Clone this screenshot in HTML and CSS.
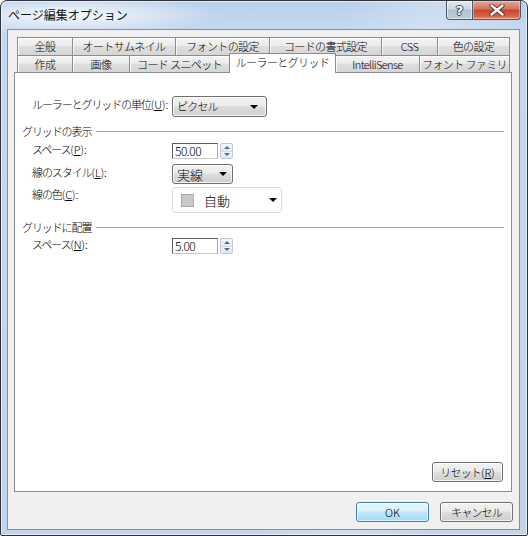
FILE: index.html
```html
<!DOCTYPE html>
<html lang="ja">
<head>
<meta charset="utf-8">
<title>ページ編集オプション</title>
<link rel="stylesheet" href="styles.css">
</head>
<body>
<div class="window">
  <div class="titlebar">
    <span class="title">ページ編集オプション</span>
    <div class="caption">
      <div class="cbtn help"><span class="qmark">?</span></div>
      <div class="cbtn close">
        <svg width="16" height="12" viewBox="0 0 16 12">
          <path d="M2.5 1.5 L13.5 10.5 M13.5 1.5 L2.5 10.5" stroke="#5a2a22" stroke-width="4.2" stroke-linecap="round"/>
          <path d="M2.5 1.5 L13.5 10.5 M13.5 1.5 L2.5 10.5" stroke="#ffffff" stroke-width="2.4" stroke-linecap="round"/>
        </svg>
      </div>
    </div>
  </div>
  <div class="client">
    <div class="tabctl">
      <div class="tabrow row1">
        <div class="tab w56">全般</div>
        <div class="tab w104">オートサムネイル</div>
        <div class="tab w95">フォントの設定</div>
        <div class="tab w113">コードの書式設定</div>
        <div class="tab w57">CSS</div>
        <div class="tab w73">色の設定</div>
      </div>
      <div class="tabrow row2">
        <div class="tab w56">作成</div>
        <div class="tab w58">画像</div>
        <div class="tab w101">コード スニペット</div>
        <div class="tab w107 sel">ルーラーとグリッド</div>
        <div class="tab w85">IntelliSense</div>
        <div class="tab w91">フォント ファミリ</div>
      </div>
      <div class="panel">
        <div class="frow h21">
          <span class="lbl">ルーラーとグリッドの単位<span class="ak">(<u>U</u>):</span></span>
          <div class="combo unit"><span>ピクセル</span><i class="arrow"></i></div>
        </div>
        <div class="grp g1"><span>グリッドの表示</span></div>
        <div class="frow mt5">
          <span class="lbl up2">スペース<span class="ak">(<u>P</u>):</span></span>
          <div class="numbox">
            <div class="num">50.00</div>
            <div class="spin"><span class="sup"><i></i></span><span class="sdn"><i></i></span></div>
          </div>
        </div>
        <div class="frow mt5">
          <span class="lbl">線のスタイル<span class="ak">(<u>L</u>):</span></span>
          <div class="combo style"><span class="big">実線</span><i class="arrow"></i></div>
        </div>
        <div class="frow mt3">
          <span class="lbl up1">線の色<span class="ak">(<u>C</u>):</span></span>
          <div class="cpick"><span class="swatch"></span><span class="ctext">自動</span><i class="arrow"></i></div>
        </div>
        <div class="grp g2"><span>グリッドに配置</span></div>
        <div class="frow mt4">
          <span class="lbl up2">スペース<span class="ak">(<u>N</u>):</span></span>
          <div class="numbox">
            <div class="num">5.00</div>
            <div class="spin"><span class="sup"><i></i></span><span class="sdn"><i></i></span></div>
          </div>
        </div>
        <div class="reset-row">
          <div class="btn reset">リセット<span class="ak">(<u>R</u>)</span></div>
        </div>
      </div>
    </div>
    <div class="dlg-btns">
      <div class="btn ok">OK</div>
      <div class="btn">キャンセル</div>
    </div>
  </div>
</div>
</body>
</html>
```

FILE: styles.css
```css
* { box-sizing: border-box; }
html, body { margin: 0; padding: 0; }
body {
  width: 528px;
  height: 536px;
  overflow: hidden;
  background: #ffffff;
  font-family: "Noto Sans CJK JP", "Noto Sans", sans-serif;
  font-size: 11px;
  font-weight: 300;
  color: #000;
}

.window {
  width: 528px;
  height: 536px;
  border: 1px solid #30343a;
  border-radius: 7px 7px 2px 2px;
  background:
    radial-gradient(ellipse 150px 20px at 70px 14px, rgba(255,255,255,0.85), rgba(255,255,255,0) 100%),
    linear-gradient(100deg, rgba(255,255,255,0) 55%, rgba(255,255,255,0.25) 70%, rgba(255,255,255,0) 85%),
    linear-gradient(180deg, #b9d0ea 0px, #c4d8ee 28px, #c0d5ec 100%);
  display: flex;
  flex-direction: column;
  box-shadow: inset 0 0 0 1px rgba(255,255,255,0.55);
}

.titlebar {
  height: 28px;
  display: flex;
  align-items: flex-start;
  padding-left: 7px;
  padding-right: 6px;
}
.title {
  font-size: 12px;
  font-weight: 400;
  line-height: 28px;
  color: #101010;
  text-shadow: 0 0 6px rgba(255,255,255,0.9);
}
.caption {
  margin-left: auto;
  display: flex;
}
.cbtn {
  height: 19px;
  border: 1px solid #4b5a70;
  border-top: none;
  display: flex;
  align-items: center;
  justify-content: center;
}
.help {
  width: 27px;
  border-radius: 0 0 0 4px;
  background: linear-gradient(180deg, #e3e9f1 0%, #cdd7e3 45%, #b3c1d2 50%, #bccad9 100%);
  box-shadow: inset 0 0 0 1px rgba(255,255,255,0.55);
}
.qmark {
  font-family: "DejaVu Sans", sans-serif;
  font-weight: bold;
  font-size: 13px;
  line-height: 1;
  color: #fff;
  text-shadow: 1px 0 0 #3a4454, -1px 0 0 #3a4454, 0 1px 0 #3a4454, 0 -1px 0 #3a4454;
}
.close {
  width: 48px;
  border-left: none;
  border-radius: 0 0 4px 0;
  background: linear-gradient(180deg, #e9a797 0%, #d7705b 45%, #c8442a 50%, #d4654b 85%, #e09a7f 100%);
  box-shadow: inset 0 0 0 1px rgba(255,255,255,0.35);
}

.client {
  margin-left: 6px;
  width: 513px;
  height: 501px;
  border: 1px solid #8090a4;
  background: #f0f0f0;
  display: flex;
  flex-direction: column;
}

.tabctl {
  margin: 7px 7px 0 6px;
}
.tabrow {
  display: flex;
  padding-left: 3px;
}
.row1 { height: 18px; }
.row2 { height: 17px; align-items: flex-end; }
.tab {
  height: 100%;
  border: 1px solid #898c95;
  border-bottom: none;
  margin-right: -1px;
  display: flex;
  align-items: center;
  justify-content: center;
  white-space: nowrap;
  line-height: 1;
  font-size: 11px;
  letter-spacing: -0.6px;
  background: linear-gradient(180deg, #f4f4f4 0%, #ececec 45%, #dedede 50%, #d6d6d6 100%);
  box-shadow: inset 1px 1px 0 rgba(255,255,255,0.8);
}
.tab.sel {
  height: 20px;
  margin-bottom: -1px;
  background: #ffffff;
  box-shadow: none;
  position: relative;
  z-index: 1;
  padding-bottom: 2px;
}
.w56 { width: 56px; }
.w57 { width: 57px; }
.w58 { width: 58px; }
.w73 { width: 73px; }
.w85 { width: 85px; }
.w91 { width: 91px; }
.w95 { width: 95px; }
.w101 { width: 101px; }
.w104 { width: 104px; }
.w107 { width: 107px; }
.w113 { width: 113px; }

.panel {
  height: 420px;
  border: 1px solid #898c95;
  background: #ffffff;
  display: flex;
  flex-direction: column;
  padding-top: 23px;
}

.frow {
  display: flex;
  align-items: flex-start;
  padding-left: 17px;
}
.h21 { height: 21px; }
.mt3 { margin-top: 3px; }
.mt4 { margin-top: 4px; }
.mt5 { margin-top: 5px; }
.lbl {
  width: 140px;
  flex: none;
  line-height: 16px;
  letter-spacing: -1.1px;
  white-space: nowrap;
}
.ak { letter-spacing: 0; }
.up1 { margin-top: -1px; }
.up2 { margin-top: -2px; }
u { text-decoration: underline; text-underline-offset: 1px; }

.grp {
  display: flex;
  align-items: center;
  height: 14px;
  padding-left: 7px;
  margin-right: 7px;
  letter-spacing: -1.1px;
  line-height: 14px;
}
.grp::after {
  content: "";
  flex: 1;
  border-top: 1px solid #a0a0a0;
  margin-left: 5px;
}
.g1 { margin-top: 7px; }
.g2 { margin-top: 7px; }

.combo {
  height: 21px;
  border: 1px solid #707070;
  border-radius: 3px;
  background: linear-gradient(180deg, #f2f2f2 0%, #ebebeb 45%, #dddddd 50%, #cfcfcf 100%);
  box-shadow: inset 0 0 0 1px rgba(255,255,255,0.75);
  display: flex;
  align-items: center;
  padding-left: 4px;
  line-height: 1;
  letter-spacing: -0.8px;
}
.combo.unit { width: 95px; padding-right: 8px; }
.combo.style { width: 61px; height: 20px; padding-right: 5px; }
.big { font-size: 13px; letter-spacing: 0; }
.arrow {
  margin-left: auto;
  width: 0;
  height: 0;
  border-left: 4px solid transparent;
  border-right: 4px solid transparent;
  border-top: 4px solid #000;
}

.numbox {
  display: flex;
  gap: 2px;
}
.num {
  width: 46px;
  height: 16px;
  border: 1px solid;
  border-color: #5c5c5c #a8a8a8 #c8c8c8 #5c5c5c;
  background: #fff;
  padding-left: 2px;
  font-size: 12px;
  line-height: 14px;
  letter-spacing: -0.5px;
}
.spin {
  width: 13px;
  height: 16px;
  display: flex;
  flex-direction: column;
  border: 1px solid #c2c9d3;
  border-radius: 2px;
  background: linear-gradient(180deg, #f5f7fa 0%, #e3e9f0 50%, #f5f7fa 50%, #dfe6ee 100%);
}
.spin span {
  flex: 1;
  display: flex;
  align-items: center;
  justify-content: center;
}
.spin .sup { border-bottom: 1px solid #d3d9e1; }
.spin i {
  width: 0;
  height: 0;
  border-left: 3px solid transparent;
  border-right: 3px solid transparent;
}
.sup i { border-bottom: 3px solid #4a6f9e; }
.sdn i { border-top: 3px solid #4a6f9e; }

.cpick {
  width: 110px;
  height: 26px;
  border: 1px solid #dadada;
  border-radius: 3px;
  background: #fff;
  display: flex;
  align-items: center;
  padding-left: 8px;
  padding-right: 4px;
}
.swatch {
  width: 13px;
  height: 13px;
  background: #c8c8c8;
  border: 1px solid #aaaaaa;
}
.ctext {
  margin-left: 10px;
  font-size: 13px;
  line-height: 1;
}

.reset-row {
  margin-top: auto;
  display: flex;
  justify-content: flex-end;
  padding-right: 8px;
  padding-bottom: 9px;
}
.btn {
  height: 20px;
  width: 73px;
  border: 1px solid #707070;
  border-radius: 3px;
  background: linear-gradient(180deg, #f2f2f2 0%, #ebebeb 45%, #dddddd 50%, #cfcfcf 100%);
  box-shadow: inset 0 0 0 1px rgba(255,255,255,0.75);
  display: flex;
  align-items: center;
  justify-content: center;
  line-height: 1;
  letter-spacing: -0.8px;
  white-space: nowrap;
}
.btn.reset { width: 71px; }
.btn.ok {
  border-color: #3c7fb1;
  background: linear-gradient(180deg, #eaf6fd 0%, #d9f0fc 45%, #bee6fd 50%, #a7d9f5 100%);
  box-shadow: inset 0 0 0 1px rgba(255,255,255,0.6);
  letter-spacing: 0;
}

.dlg-btns {
  display: flex;
  justify-content: flex-end;
  gap: 11px;
  margin-top: 10px;
  padding-right: 6px;
}
```
